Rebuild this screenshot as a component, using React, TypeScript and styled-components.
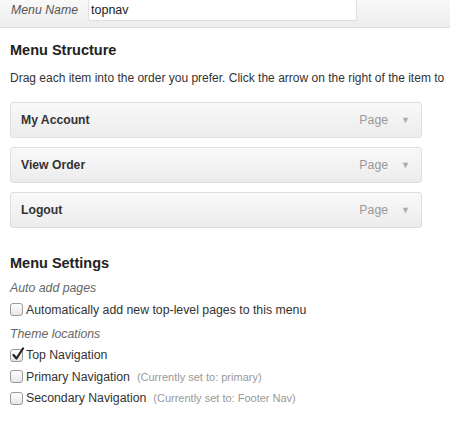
import styled, { createGlobalStyle } from 'styled-components';

const GlobalStyle = createGlobalStyle`
  body {
    margin: 0;
    background: #fff;
    font-family: "Liberation Sans", Arial, sans-serif;
    color: #333;
    font-size: 12.3px;
    overflow: hidden;
  }
`;

const Page = styled.div`
  width: 450px;
  height: 424px;
  overflow: hidden;
`;

const HeaderBar = styled.div`
  height: 28px;
  box-sizing: border-box;
  display: flex;
  align-items: flex-start;
  padding-left: 11px;
  background: linear-gradient(to bottom, #f9f9f9, #ececec);
  border-bottom: 1px solid #dfdfdf;
`;

const NameLabel = styled.label`
  font-style: italic;
  font-size: 12.3px;
  color: #555;
  width: 77px;
  line-height: 20px;
`;

const NameInput = styled.div`
  width: 269px;
  height: 22px;
  margin-top: -1px;
  box-sizing: border-box;
  background: #fff;
  border: 1px solid #dfdfdf;
  border-radius: 3px;
  padding: 0 2px;
  font-size: 12.5px;
  line-height: 20px;
  color: #222;
`;

const Body = styled.div`
  padding: 0 10px;
`;

const SectionTitle = styled.h3<{ $top: number }>`
  margin: ${(p) => p.$top}px 0 0;
  font-size: 14.5px;
  font-weight: bold;
  color: #222;
  line-height: 18px;
`;

const Hint = styled.p`
  margin: 10px 0 0;
  white-space: nowrap;
  font-size: 12px;
  line-height: 18px;
  color: #333;
`;

const ItemList = styled.ul`
  list-style: none;
  margin: 15px 0 0;
  padding: 0;
  width: 412px;
  display: flex;
  flex-direction: column;
  gap: 9px;
`;

const Item = styled.li`
  height: 36px;
  box-sizing: border-box;
  display: flex;
  align-items: center;
  padding: 0 11px 0 10px;
  border: 1px solid #dfdfdf;
  border-radius: 3px;
  background: linear-gradient(to bottom, #f9f9f9, #ececec);
`;

const ItemTitle = styled.span`
  flex: 1;
  font-weight: bold;
  font-size: 12.2px;
  color: #333;
`;

const ItemType = styled.span`
  color: #999;
  font-size: 12.3px;
`;

const Arrow = styled.span`
  color: #aaa;
  font-size: 9px;
  margin-left: 13px;
`;

const GroupLabel = styled.div<{ $top: number }>`
  margin: ${(p) => p.$top}px 0 2px;
  font-style: italic;
  color: #666;
  font-size: 12.3px;
  line-height: 18px;
`;

const CheckRow = styled.label`
  display: flex;
  align-items: center;
  gap: 3px;
  height: 21.5px;
  font-size: 12.3px;
  color: #333;
  white-space: nowrap;
`;

const Box = styled.span`
  position: relative;
  width: 13px;
  height: 13px;
  box-sizing: border-box;
  border: 1px solid #9a9a9a;
  border-radius: 3px;
  background: linear-gradient(to bottom, #fff, #e6e6e6);
  flex-shrink: 0;
`;

const Note = styled.span`
  color: #999;
  font-size: 11px;
  margin-left: 4px;
`;

const Tick = () => (
  <svg
    width="14"
    height="14"
    viewBox="0 0 14 14"
    style={{ position: 'absolute', left: 0, top: -3 }}
  >
    <path
      d="M2.5 8 L5.5 11.5 L12 1.5"
      fill="none"
      stroke="#222"
      strokeWidth="2.2"
      strokeLinecap="round"
      strokeLinejoin="round"
    />
  </svg>
);

const items = ['My Account', 'View Order', 'Logout'];

const locations = [
  { name: 'Top Navigation', checked: true },
  { name: 'Primary Navigation', note: '(Currently set to: primary)' },
  { name: 'Secondary Navigation', note: '(Currently set to: Footer Nav)' },
];

export default function App() {
  return (
    <Page>
      <GlobalStyle />
      <HeaderBar>
        <NameLabel>Menu Name</NameLabel>
        <NameInput>topnav</NameInput>
      </HeaderBar>
      <Body>
        <SectionTitle $top={13}>Menu Structure</SectionTitle>
        <Hint>Drag each item into the order you prefer. Click the arrow on the right of the item to</Hint>
        <ItemList>
          {items.map((name) => (
            <Item key={name}>
              <ItemTitle>{name}</ItemTitle>
              <ItemType>Page</ItemType>
              <Arrow>▼</Arrow>
            </Item>
          ))}
        </ItemList>
        <SectionTitle $top={26}>Menu Settings</SectionTitle>
        <GroupLabel $top={7}>Auto add pages</GroupLabel>
        <CheckRow>
          <Box />
          Automatically add new top-level pages to this menu
        </CheckRow>
        <GroupLabel $top={4}>Theme locations</GroupLabel>
        {locations.map((l) => (
          <CheckRow key={l.name}>
            <Box>{l.checked && <Tick />}</Box>
            {l.name}
            {l.note && <Note>{l.note}</Note>}
          </CheckRow>
        ))}
      </Body>
    </Page>
  );
}
